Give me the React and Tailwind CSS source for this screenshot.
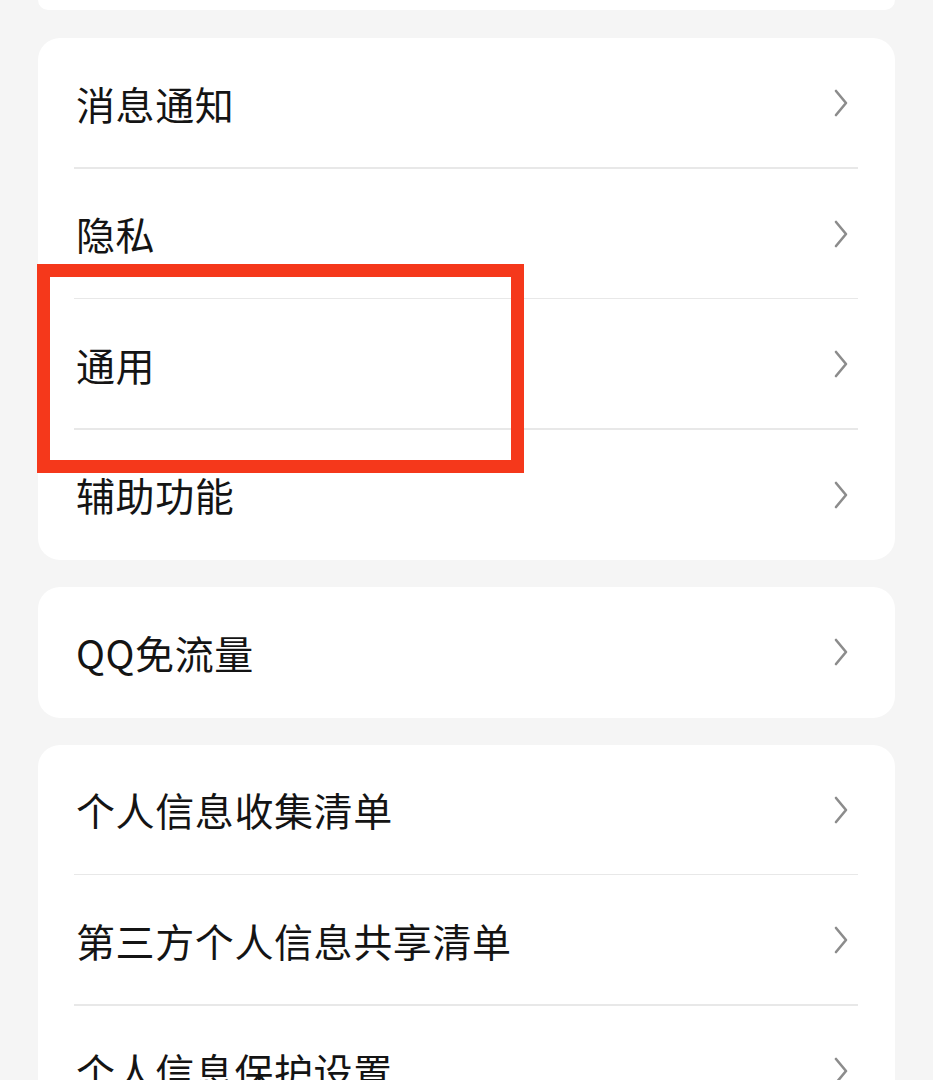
import React from 'react';

const groups = [
    ['消息通知', '隐私', '通用', '辅助功能'],
    ['QQ免流量'],
    ['个人信息收集清单', '第三方个人信息共享清单', '个人信息保护设置'],
];

function Chevron() {
    return (
        <svg width="16" height="28" viewBox="0 0 16 28" fill="none" className="shrink-0">
            <polyline
                points="3,2 13,14 3,26"
                stroke="#8c8c8c"
                strokeWidth="2.6"
                strokeLinecap="round"
                strokeLinejoin="round"
            />
        </svg>
    );
}

function Row({ label, last }) {
    return (
        <div className="relative h-[130.5px] flex items-center justify-between pl-[38px] pr-[46px]">
            <span className="text-[39px] leading-none text-[#141414] tracking-[0.6px]">{label}</span>
            <Chevron />
            {!last && (
                <div className="absolute left-[36px] right-[37px] bottom-0 h-[1.5px] bg-[#e8e8e8]" />
            )}
        </div>
    );
}

export default function App() {
    return (
        <div
            className="min-h-screen h-[1080px] overflow-hidden bg-[#f5f5f5] relative"
            style={{ fontFamily: '"Noto Sans CJK SC", "Noto Sans", sans-serif' }}
        >
            <div className="mx-[38px] h-[10px] bg-white rounded-b-[22px]" />
            <div className="flex flex-col gap-[27px] pt-[28px]">
                {groups.map((items, gi) => (
                    <div key={gi} className="mx-[38px] bg-white rounded-[22px]">
                        {items.map((label, i) => (
                            <Row key={label} label={label} last={i === items.length - 1 && gi !== 2} />
                        ))}
                    </div>
                ))}
            </div>
            {/* red highlight around 通用 */}
            <div className="absolute left-[37px] top-[264px] w-[487px] h-[209px] border-[13px] border-[#f5381b]" />
        </div>
    );
}
